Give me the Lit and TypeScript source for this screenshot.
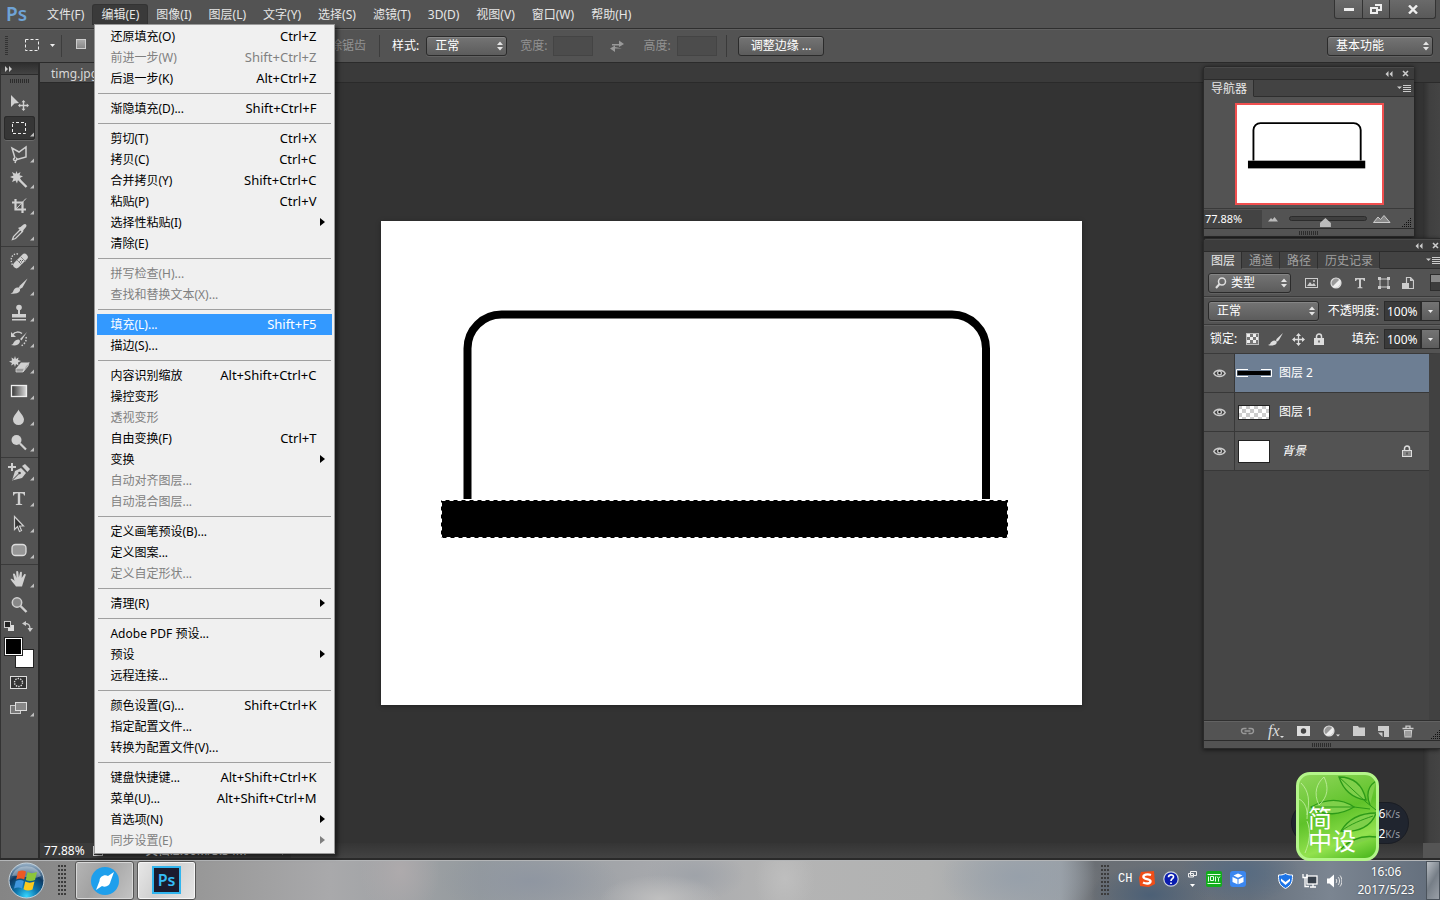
import { LitElement, html, svg, css, nothing } from "lit";
import { customElement, property } from "lit/decorators.js";
import { classMap } from "lit/directives/class-map.js";

const baseText = css`
  :host {
    font-family: "Noto Sans", "Noto Sans CJK SC", sans-serif;
    font-size: 12px;
    line-height: 16px;
  }
  * { box-sizing: border-box; }
  button, select, input {
    font: inherit;
    color: inherit;
    margin: 0;
    padding: 0;
    border: 0;
    background: none;
    border-radius: 0;
  }
  svg { display: block; flex: none; }
  ul { list-style: none; margin: 0; padding: 0; }
`;

const controls = css`
  .pick {
    display: grid;
    align-items: center;
    color: #fff;
  }
  .pick > * { grid-area: 1 / 1; }
  .pick select {
    appearance: none;
    width: 100%;
    height: 20px;
    padding: 0 16px 0 8px;
    border: 1px solid #2b2b2b;
    border-radius: 3px;
    background: linear-gradient(#747474, #5c5c5c);
    box-shadow: inset 0 1px #858585, 0 1px #626262;
  }
  .pick .updown { justify-self: end; margin-right: 4px; pointer-events: none; }
  .pick .lens { margin-left: 7px; pointer-events: none; z-index: 1; }
  .pick.search select { padding-left: 22px; }
`;

const upDown = html`<svg class="updown" width="6" height="10" viewBox="0 0 6 10"><path d="M0 4L3 0.500L6 4zM0 6h6L3 9.500z" fill="#e4e4e4"/></svg>`;

const drawing = (line: number, ants: boolean) => svg`
  <rect width="701" height="484" fill="#fff"/>
  <path d="M86.500 278V127.500a34 34 0 0 1 34-34H571a34 34 0 0 1 34 34V278" fill="none" stroke="#000" stroke-width="${line}"/>
  <rect x="60" y="279" width="567" height="38" fill="#000"/>
  ${ants ? svg`<rect x="60.500" y="279.500" width="566" height="37" fill="none" stroke="#fff" stroke-dasharray="4 4"/>` : nothing}`;

/* ---------- edit menu ---------- */

interface Entry { label: string; keys?: string; off?: boolean; sub?: boolean; hot?: boolean; }

const editGroups: Entry[][] = [
  [
    { label: "还原填充(O)", keys: "Ctrl+Z" },
    { label: "前进一步(W)", keys: "Shift+Ctrl+Z", off: true },
    { label: "后退一步(K)", keys: "Alt+Ctrl+Z" },
  ],
  [{ label: "渐隐填充(D)...", keys: "Shift+Ctrl+F" }],
  [
    { label: "剪切(T)", keys: "Ctrl+X" },
    { label: "拷贝(C)", keys: "Ctrl+C" },
    { label: "合并拷贝(Y)", keys: "Shift+Ctrl+C" },
    { label: "粘贴(P)", keys: "Ctrl+V" },
    { label: "选择性粘贴(I)", sub: true },
    { label: "清除(E)" },
  ],
  [{ label: "拼写检查(H)...", off: true }, { label: "查找和替换文本(X)...", off: true }],
  [{ label: "填充(L)...", keys: "Shift+F5", hot: true }, { label: "描边(S)..." }],
  [
    { label: "内容识别缩放", keys: "Alt+Shift+Ctrl+C" },
    { label: "操控变形" },
    { label: "透视变形", off: true },
    { label: "自由变换(F)", keys: "Ctrl+T" },
    { label: "变换", sub: true },
    { label: "自动对齐图层...", off: true },
    { label: "自动混合图层...", off: true },
  ],
  [{ label: "定义画笔预设(B)..." }, { label: "定义图案..." }, { label: "定义自定形状...", off: true }],
  [{ label: "清理(R)", sub: true }],
  [{ label: "Adobe PDF 预设..." }, { label: "预设", sub: true }, { label: "远程连接..." }],
  [{ label: "颜色设置(G)...", keys: "Shift+Ctrl+K" }, { label: "指定配置文件..." }, { label: "转换为配置文件(V)..." }],
  [
    { label: "键盘快捷键...", keys: "Alt+Shift+Ctrl+K" },
    { label: "菜单(U)...", keys: "Alt+Shift+Ctrl+M" },
    { label: "首选项(N)", sub: true },
    { label: "同步设置(E)", sub: true, off: true },
  ],
];

@customElement("edit-menu")
class EditMenu extends LitElement {
  static styles = [baseText, css`
    :host {
      display: block;
      width: 241px;
      padding: 1px 2px 2px;
      border: 1px solid #9a9a9a;
      background: #f0f0f0;
      color: #000;
      box-shadow: 3px 3px 4px rgba(0, 0, 0, 0.5);
    }
    .group + .group::before {
      content: "";
      display: block;
      height: 1px;
      margin: 4px 1px;
      background: #a0a0a0;
    }
    .row {
      display: flex;
      align-items: center;
      width: 100%;
      height: 21px;
      padding: 0 16px 0 13px;
      white-space: nowrap;
      text-align: left;
    }
    .label { flex: 1; padding-top: 2px; }
    .keys { font-size: 13px; }
    .off { color: #808080; }
    .hot { background: #3399ff; color: #fff; }
    .sub { padding-right: 7px; }
  `];

  render() {
    return html`${editGroups.map((g) => html`<div class="group" role="group">${g.map((e) => html`
      <button role="menuitem" ?disabled=${!!e.off} class=${classMap({ row: true, off: !!e.off, hot: !!e.hot, sub: !!e.sub })}>
        <span class="label">${e.label}</span>
        ${e.keys ? html`<span class="keys">${e.keys}</span>` : nothing}
        ${e.sub ? html`<svg width="5" height="8" viewBox="0 0 5 8"><path d="M0 0L5 4L0 8z" fill="currentColor"/></svg>` : nothing}
      </button>`)}</div>`)}`;
  }
}

/* ---------- tools ---------- */

const G = "#d0d0d0";

const toolGroups: { name: string; icon: unknown; more: boolean; on?: boolean }[][] = [
  [
    { name: "移动", more: false, icon: svg`<path d="M2 3v12l3.500-3.500L10 11z" fill="${G}"/><path d="M14.500 8l2 2.200h-1.300v2.600h2.600v-1.300l2.200 2-2.200 2v-1.300h-2.600v2.600h1.300l-2 2.200-2-2.200h1.300v-2.600h-2.600v1.300L9 13.500l2.200-2v1.300h2.600v-2.600h-1.300z" fill="${G}"/>` },
    { name: "矩形选框", more: true, on: true, icon: svg`<rect x="3.500" y="4.500" width="13" height="11" fill="none" stroke="#eee" stroke-dasharray="3 2" stroke-dashoffset="1.500"/>` },
    { name: "套索", more: true, icon: svg`<path d="M6 14L3 4l7 4 7-5v10l-9 2.500M6 14c-2 0-2 2.500 0 2.500s2.500-2 1-2.500M7 16l-1 3" fill="none" stroke="${G}" stroke-width="1.500"/>` },
    { name: "魔棒", more: true, icon: svg`<path d="M7.500 1l1 2.800L11.500 2l-1 3.200 3.500 1-3 1.800 1.500 3.500-3.500-1.500L8 13.500 6.500 10.500 3 12l1.500-3.500L1 7l3.500-1.500L3 2l3.500 1.800z" fill="${G}"/><path d="M10 9.500l7.500 7.500" stroke="${G}" stroke-width="2.400"/>` },
    { name: "裁剪", more: true, icon: svg`<path d="M6.500 3v10.500H17M3 6.500h10.500V17" fill="none" stroke="${G}" stroke-width="2.200"/><path d="M7 13L17 2.500" stroke="${G}"/>` },
    { name: "吸管", more: true, icon: svg`<path d="M3.500 17.500l1-3 7-7 2 2-7 7z" fill="none" stroke="${G}" stroke-width="1.300"/><path d="M10 5.500l1.500-.500 3-2.500c2-1.500 4 .500 2.500 2.500l-2.500 3-.500 1.500-1 .500-4-4z" fill="${G}"/>` },
  ],
  [
    { name: "修复画笔", more: true, icon: svg`<path d="M9 3C3 2 .500 8 3.500 14" fill="none" stroke="${G}" stroke-width="1.400" stroke-dasharray="1.400 1.400"/><path d="M7.500 14L15.500 6" stroke="${G}" stroke-width="6.500" stroke-linecap="round"/><path d="M8 9l5 5M11.500 5.500l5 5" stroke="#888"/><path d="M10 11h3M11 9.500h3" stroke="#555" stroke-dasharray="1 1"/>` },
    { name: "画笔", more: true, icon: svg`<path d="M18.500 1.500L11 8.500 9.500 11l1.500 1 2.500-1.500z" fill="${G}"/><path d="M8.500 10.500c2 0 3.500 2 2 4S5 17 1.500 16.500c2-.500 2.500-1.500 3-3s2-3 4-3z" fill="${G}"/>` },
    { name: "仿制图章", more: true, icon: svg`<circle cx="10" cy="4.500" r="2.800" fill="${G}"/><path d="M9 6h2v5h6v3.500H3V11h6zM3 16h14v1.500H3z" fill="${G}"/>` },
    { name: "历史记录画笔", more: true, icon: svg`<path d="M4 5.500C6 2.500 10 2.500 13 4.500" fill="none" stroke="${G}" stroke-width="1.500"/><path d="M2 3v5h5z" fill="${G}"/><path d="M18 3l-7 7 1.500 1.500zM9.500 10.500c2 0 2 3.500-.500 5s-5 1-7 .500c2-.500 2-1.500 3-3s2.500-2.500 4.500-2.500z" fill="${G}"/><path d="M17 8c1 3-1 7-5 9" fill="none" stroke="${G}" stroke-width="1.500" stroke-dasharray="1.500 1.500"/>` },
    { name: "橡皮擦", more: true, icon: svg`<path d="M6 1l1 3 2.500-1.500L9 5l3 1-3 1.500.500 3L7 9l-1 3-1-3-3 1.500L3 8 0 6.500 3 5.500 2.500 2.500 5 4z" fill="${G}"/><path d="M7 13.500l5-6h8l-4.500 6z" fill="${G}"/><path d="M7 13.500v3.500h7l1.500-3.500zM15.500 13.500L14 17l5-6 1-3.500z" fill="#999" stroke="${G}" stroke-width=".800"/>` },
    { name: "渐变", more: true, icon: svg`<defs><linearGradient id="g"><stop stop-color="#333"/><stop offset="1" stop-color="#ddd"/></linearGradient></defs><rect x="2.500" y="4.500" width="15" height="11" fill="url(#g)" stroke="#eee" stroke-width="1.300"/>` },
    { name: "模糊", more: true, icon: svg`<path d="M9.500 2.500c1 3 5.500 6.500 5.500 10a5.500 5.500 0 0 1-11 0C4 9 8.500 5.500 9.500 2.500z" fill="${G}"/>` },
    { name: "减淡", more: true, icon: svg`<circle cx="7.500" cy="7" r="5" fill="${G}"/><path d="M11 10.500l6 6" stroke="${G}" stroke-width="2.200"/>` },
  ],
  [
    { name: "钢笔", more: true, icon: svg`<path d="M3 1v8M-1 5h8" stroke="${G}" stroke-width="2"/><path d="M3 18.500L6 9l6-3 5 5-4 5z" fill="${G}"/><path d="M3.500 18l6-6" stroke="#444"/><circle cx="10.500" cy="11" r="1.300" fill="#444"/><path d="M13 4l3-2 5 5-2.500 3z" fill="${G}"/>` },
    { name: "文字", more: true, icon: svg`<path d="M4 4h12v3.500h-1c-.200-1.500-1-2.200-3.800-2.200V15c0 .800.500 1.200 2 1.200V17H6.800v-.800c1.500 0 2-.400 2-1.200V5.300C6 5.300 5.200 6 5 7.500H4z" fill="${G}"/>` },
    { name: "路径选择", more: true, icon: svg`<path d="M5.500 2.500v13l3-3 2 5 2-1-2-4.500h4z" fill="#333" stroke="${G}" stroke-width="1.200"/>` },
    { name: "圆角矩形", more: true, icon: svg`<rect x="3" y="4.500" width="14" height="11" rx="3.500" fill="#969696" stroke="#ddd" stroke-width="1.300"/>` },
  ],
  [
    { name: "抓手", more: true, icon: svg`<path d="M1.500 10c1.500-.800 2.500.200 4 2L4 5.500c0-1.200 1.700-1.400 2-.200L7.500 9l-.300-6c0-1.300 1.900-1.300 2.100 0l.500 5.500L11 3.500c.200-1.200 2-1 1.900.300L12.700 9l2.300-3.500c.700-1 2.100-.300 1.700.800-1.600 4-1.700 5.500-2.700 8L13 17.500H7C6 15.500 3 13 1.500 10z" fill="${G}"/>` },
    { name: "缩放", more: false, icon: svg`<circle cx="8" cy="7.500" r="4.700" fill="#888" stroke="${G}" stroke-width="1.500"/><path d="M11.500 11l6 6" stroke="${G}" stroke-width="2.400"/>` },
  ],
];

@customElement("tool-box")
class ToolBox extends LitElement {
  static styles = [baseText, css`
    :host {
      display: flex;
      flex-direction: column;
      width: 40px;
      border-left: 1px solid #333;
      border-right: 2px solid #2b2b2b;
      background: #535353;
    }
    .head {
      height: 12px;
      padding: 3px 4px;
      background: linear-gradient(#2e2e2e, #434343);
      border-bottom: 1px solid #2b2b2b;
    }
    .grip {
      width: 20px;
      height: 4px;
      margin: 4px 0 6px 9px;
      background: repeating-linear-gradient(90deg, #2c2c2c 0 1px, transparent 1px 2px);
    }
    .group { display: flex; flex-direction: column; gap: 2px; padding: 1px 3px; }
    .group + .group { border-top: 1px solid #3a3a3a; margin-top: 1px; padding-top: 2px; }
    .tool {
      display: flex;
      align-items: center;
      width: 31px;
      height: 24px;
      padding-left: 5px;
      border-radius: 3px;
    }
    .tool svg { overflow: visible; }
    .on { background: #363636; box-shadow: inset 0 0 0 1px #2a2a2a, 0 1px #6a6a6a; }
    .mini { display: flex; gap: 7px; padding: 3px 3px; height: 19px; }
    .colors { display: grid; width: 30px; height: 31px; margin-left: 3px; }
    .fore, .back { width: 19px; height: 19px; border: 1px solid #222; box-shadow: inset 0 0 0 1px #fff; grid-area: 1 / 1; }
    .fore { background: #000; z-index: 1; }
    .back { background: #fff; place-self: end; }
    .foot { display: grid; gap: 2px; padding: 2px 3px; }
  `];

  render() {
    const more = svg`<path d="M25 14.500v4h-4z" fill="#c0c0c0"/>`;
    return html`
      <div class="head"><svg width="8" height="6" viewBox="0 0 8 6"><path d="M0 0l3 3-3 3zM4 0l3 3-3 3z" fill="#ccc"/></svg></div>
      <div class="grip"></div>
      ${toolGroups.map((g) => html`<div class="group">${g.map((t) => html`
        <button class=${classMap({ tool: true, on: !!t.on })} aria-label=${t.name}>
          <svg width="20" height="20" viewBox="0 0 20 20">${t.icon}${t.more ? more : nothing}</svg>
        </button>`)}</div>`)}
      <div class="mini">
        <svg width="11" height="11" viewBox="0 0 11 11"><rect x="4" y="4" width="6" height="6" fill="#ddd"/><rect x="0.500" y="0.500" width="6" height="6" fill="#222" stroke="#ccc"/></svg>
        <svg width="11" height="11" viewBox="0 0 11 11"><path d="M3 2.500c4 0 5 1.500 5 6" fill="none" stroke="#ccc" stroke-width="1.300"/><path d="M0 2.500L4 0v5zM5.500 7h5.500L8 11z" fill="#ccc"/></svg>
      </div>
      <div class="colors"><button class="fore" aria-label="前景色"></button><button class="back" aria-label="背景色"></button></div>
      <div class="foot">
        <button class="tool" aria-label="快速蒙版"><svg width="20" height="20" viewBox="0 0 20 20"><rect x="1.500" y="4.500" width="16" height="12" fill="#333" stroke="#ddd"/><circle cx="9.500" cy="10.500" r="4" fill="none" stroke="#ddd" stroke-width="1.400" stroke-dasharray="1.400 1.100"/></svg></button>
        <button class="tool" aria-label="屏幕模式"><svg width="20" height="20" viewBox="0 0 20 20"><rect x="1.500" y="7.500" width="10" height="8" fill="#777" stroke="#ccc"/><rect x="6.500" y="4.500" width="11" height="8" fill="#888" stroke="#ddd"/>${more}</svg></button>
      </div>`;
  }
}

/* ---------- floating panels ---------- */

const panelStyles = css`
  .panel { background: #535353; color: #fff; border: 1px solid #2a2a2a; border-right: 0; border-radius: 4px 0 0 0; box-shadow: 0 1px 4px rgba(0, 0, 0, 0.6); overflow: hidden; }
  .head { display: flex; justify-content: flex-end; align-items: center; gap: 9px; height: 12px; padding-right: 5px; background: #3c3c3c; border-top: 1px solid #4a4a4a; }
  .tabs { display: flex; height: 18px; background: #434343; border-top: 1px solid #2b2b2b; color: #a0a0a0; }
  .tab { padding: 0 6px 0 7px; line-height: 17px; border-right: 1px solid #2e2e2e; border-bottom: 1px solid #5e5e5e; }
  .tab.on { background: #535353; color: #e8e8e8; border-bottom-color: #535353; }
  .rest { flex: 1; display: flex; justify-content: flex-end; align-items: center; border-bottom: 1px solid #2e2e2e; padding-right: 3px; }
  .grip { height: 8px; border-top: 1px solid #2b2b2b; display: grid; place-items: center; }
  .grip i { width: 20px; height: 4px; background: repeating-linear-gradient(90deg, #2c2c2c 0 1px, transparent 1px 2px); }
`;

const headIcons = html`
  <svg width="8" height="6" viewBox="0 0 8 6"><path d="M3.500 0v6l-3-3zM7.500 0v6l-3-3z" fill="#ccc"/></svg>
  <svg width="7" height="7" viewBox="0 0 7 7"><path d="M1 1l5 5M6 1L1 6" stroke="#ccc" stroke-width="1.600"/></svg>`;
const flyout = html`<svg width="14" height="9" viewBox="0 0 14 9"><path d="M0 2.500h5L2.500 5z" fill="#ccc"/><path d="M6 1.500h8M6 3.500h8M6 5.500h8M6 7.500h8" stroke="#ccc"/></svg>`;
const corner = html`<svg width="10" height="10" viewBox="0 0 10 10"><path d="M0 9.500h10M2 7.500h8M4 5.500h6M6 3.500h4M8 1.500h2" stroke="#111" stroke-width="1" stroke-dasharray="1 1"/></svg>`;

@customElement("navigator-panel")
class NavigatorPanel extends LitElement {
  static styles = [baseText, panelStyles, css`
    .view { display: flex; justify-content: center; padding: 6px 0 3px; }
    .frame { border: 2px solid #f04f4f; }
    .bar { display: flex; align-items: center; height: 20px; border-top: 1px solid #3a3a3a; }
    .zoom { width: 58px; height: 18px; padding-left: 1px; background: #434343; font-size: 11px; }
    .small { margin: 2px 0 0 6px; }
    .range { appearance: none; width: 78px; height: 16px; margin: 0 6px 0 11px; }
    .range::-webkit-slider-runnable-track { height: 5px; border-radius: 3px; background: #3f3f3f; border: 1px solid #2c2c2c; }
    .range::-webkit-slider-thumb { appearance: none; width: 11px; height: 9px; margin-top: 1px; background: #bbb; clip-path: polygon(50% 0, 100% 55%, 100% 100%, 0 100%, 0 55%); }
    .bar .end { margin: 6px 2px 0 auto; }
  `];

  render() {
    return html`<section class="panel">
      <div class="head">${headIcons}</div>
      <div class="tabs"><button class="tab on">导航器</button><div class="rest">${flyout}</div></div>
      <div class="view"><svg class="frame" width="149" height="102" viewBox="7 4 701 484" preserveAspectRatio="none"><rect width="708" height="488" fill="#fff"/>${drawing(9, false)}</svg></div>
      <div class="bar">
        <input class="zoom" aria-label="缩放" value="77.88%">
        <svg class="small" width="10" height="5" viewBox="0 0 10 5"><path d="M0 4.500L3 1l1.500 1.500L6.500 0 10 4.500z" fill="#bbb"/></svg>
        <input class="range" type="range" aria-label="缩放比例" min="0" max="100" value="46">
        <svg width="18" height="8" viewBox="0 0 18 8"><path d="M.500 7.500L5 2l2.500 2.500L11 .500l6 7z" fill="#888" stroke="#ccc"/></svg>
        <span class="end">${corner}</span>
      </div>
      <div class="grip"><i></i></div>
    </section>`;
  }
}

const eye = html`<svg width="13" height="10" viewBox="0 0 13 10"><path d="M.800 5.500C3 1.200 10 1.200 12.200 5.500 10 9.500 3 9.500.800 5.500z" fill="#444" stroke="#ccc" stroke-width="1.500"/><circle cx="6.500" cy="5" r="2.500" fill="#ccc"/><circle cx="6.500" cy="5" r="1.200" fill="#222"/></svg>`;
const lock = (fill: string) => html`<svg width="10" height="12" viewBox="0 0 10 12"><path d="M2.500 6V3.500a2.500 2.500 0 0 1 5 0V6" fill="none" stroke="#ddd" stroke-width="1.500"/><rect x="0.500" y="5.500" width="9" height="6" fill=${fill} stroke="#ddd"/><path d="M5 7.500v2" stroke="#444" stroke-width="1.300"/></svg>`;
const thumbs = {
  bar: html`<svg width="36" height="8" viewBox="0 0 36 8"><path d="M1.500 2h33v4h-33z" fill="#000"/><path d="M12 .500H.500v7H12M25 .500h10.500v7H25" fill="none" stroke="#fff"/></svg>`,
  clear: html`<svg width="32" height="15" viewBox="0 0 32 15"><defs><pattern id="c" width="8" height="8" patternUnits="userSpaceOnUse"><rect width="8" height="8" fill="#fff"/><path d="M0 0h4v4H0zM4 4h4v4H4z" fill="#ccc"/></pattern></defs><rect x="0.500" y="0.500" width="31" height="14" fill="url(#c)" stroke="#222"/></svg>`,
  white: html`<svg width="32" height="23" viewBox="0 0 32 23"><rect x="0.500" y="0.500" width="31" height="22" fill="#fff" stroke="#222"/></svg>`,
};
const halfDisc = svg`<circle cx="6" cy="6" r="5" fill="#999" stroke="#ddd" stroke-width="1.200"/><path d="M9.500 2.500a5 5 0 0 1-7 7z" fill="#eee"/>`;

@customElement("layers-panel")
class LayersPanel extends LitElement {
  static styles = [baseText, panelStyles, controls, css`
    :host { display: flex; flex-direction: column; }
    .panel { flex: 1; display: flex; flex-direction: column; }
    .head { padding-right: 1px; }
    .rest { padding-right: 0; overflow: hidden; }
    .line { display: flex; align-items: center; height: 27px; padding-left: 4px; border-top: 1px solid #626262; box-shadow: 0 -1px #3a3a3a; margin-top: 1px; white-space: nowrap; }
    .line.first { border-top: 0; box-shadow: none; margin-top: 0; }
    .kind { width: 83px; }
    .mode { width: 111px; }
    .filters { flex: 1; display: flex; align-items: center; justify-content: space-between; padding: 0 16px 0 14px; }
    .switch { width: 10px; height: 17px; border: 1px solid #2d2d2d; border-right: 0; background: linear-gradient(#888 50%, #3d3d3d 50%); }
    .tag { margin-left: auto; padding-right: 5px; }
    .num { width: 37px; height: 20px; padding: 0 2px; background: #3a3a3a; border: 1px solid #2b2b2b; color: #fff; }
    .drop { display: grid; place-items: center; width: 19px; height: 20px; background: linear-gradient(#747474, #5c5c5c); border: 1px solid #2b2b2b; }
    .locks { display: flex; align-items: center; gap: 9px; padding-left: 9px; }
    .lead { padding-left: 2px; }
    .list { flex: 1; background: #464646; margin-top: 1px; border-top: 1px solid #3a3a3a; border-right: 11px solid #414141; }
    .layer { display: flex; align-items: center; height: 39px; background: #535353; border-bottom: 1px solid #383838; }
    .see { width: 31px; height: 38px; display: grid; place-items: center; border-right: 1px solid #383838; }
    .body { flex: 1; height: 38px; display: flex; align-items: center; padding: 0 17px 0 1px; }
    .body.on { background: #6d7e93; }
    .pic { width: 36px; display: grid; place-items: center; }
    .name { flex: 1; padding-left: 7px; text-align: left; }
    .back { font-style: italic; padding-left: 10px; }
    .foot { display: flex; align-items: center; height: 19px; padding-left: 36px; border-top: 1px solid #626262; box-shadow: 0 -1px #2f2f2f; gap: 13px; overflow: hidden; }
    .foot .end { margin: 6px 0 0 4px; }
    .fx { font: italic 16px/16px "Liberation Serif", serif; color: #ddd; display: flex; align-items: flex-end; }
  `];

  private layer(name: string, pic: unknown, on = false, fixed = false) {
    return html`<li class="layer">
      <button class="see" aria-label="显示图层">${eye}</button>
      <button class=${classMap({ body: true, on })}><span class="pic">${pic}</span><span class=${classMap({ name: true, back: fixed })}>${name}</span>${fixed ? lock("#888") : nothing}</button>
    </li>`;
  }

  render() {
    const down = html`<svg width="5" height="3" viewBox="0 0 5 3"><path d="M0 0h5L2.500 3z" fill="#eee"/></svg>`;
    return html`<section class="panel">
      <div class="head">${headIcons}</div>
      <div class="tabs"><button class="tab on">图层</button><button class="tab">通道</button><button class="tab">路径</button><button class="tab">历史记录</button><div class="rest">${flyout}</div></div>
      <div class="line first">
        <label class="pick search kind"><svg class="lens" width="12" height="12" viewBox="0 0 12 12"><circle cx="7" cy="4.500" r="3.500" fill="none" stroke="#ddd" stroke-width="1.500"/><path d="M4.500 7L1 11" stroke="#ddd" stroke-width="2"/></svg>
          <select aria-label="筛选"><option>类型</option></select>${upDown}</label>
        <div class="filters">
          <svg width="13" height="12" viewBox="0 0 13 12"><rect x="0.500" y="1.500" width="12" height="9" fill="none" stroke="#ccc"/><path d="M2 9l3-4 2 2.500L9 6l2 3z" fill="#ccc"/><circle cx="9" cy="4" r="1" fill="#ccc"/></svg>
          <svg width="12" height="12" viewBox="0 0 12 12">${halfDisc}</svg>
          <svg width="12" height="12" viewBox="0 0 12 12"><path d="M1 1h10v3h-1L9 2.500H7V10l1.500.500v.700h-5v-.700L5 10V2.500H3L2 4H1z" fill="#ccc"/></svg>
          <svg width="12" height="12" viewBox="0 0 12 12"><rect x="2" y="2" width="8" height="8" fill="none" stroke="#ccc"/><path d="M0 0h3v3H0zM9 0h3v3H9zM0 9h3v3H0zM9 9h3v3H9z" fill="#ccc"/></svg>
          <svg width="12" height="12" viewBox="0 0 12 12"><path d="M4.500 6V.500h4l3 3v8H7" fill="none" stroke="#ccc" stroke-width="1.200"/><path d="M8 .500V4h3.500M0 6h7v6H0z" fill="#ccc"/></svg>
        </div>
        <button class="switch" aria-label="图层过滤开关"></button>
      </div>
      <div class="line">
        <label class="pick mode"><select aria-label="混合模式"><option>正常</option></select>${upDown}</label>
        <label class="tag" for="op">不透明度:</label><input id="op" class="num" value="100%"><button class="drop" aria-label="不透明度滑块">${down}</button>
      </div>
      <div class="line">
        <span class="lead">锁定:</span>
        <div class="locks">
          <svg width="13" height="12" viewBox="0 0 13 12"><rect x="0.500" y="0.500" width="12" height="11" fill="#777" stroke="#bbb"/><path d="M1 1h3v3H1zM7 1h3v3H7zM4 4h3v3H4zM10 4h2v3h-2zM1 7h3v3H1zM7 7h3v3H7z" fill="#eee"/></svg>
          <svg width="15" height="13" viewBox="0 0 15 13"><path d="M15 0L8.500 6 8 8l1.500.500L11 7zM6.500 7.500c2 0 3 2 1.500 3.500S3 13 0 12c2-.500 2-1 2.500-2s2-2.500 4-2.500z" fill="#ddd"/></svg>
          <svg width="13" height="13" viewBox="0 0 13 13"><path d="M6.500 1v11M1 6.500h11" stroke="#ddd" stroke-width="1.300"/><path d="M6.500 0L9 3H4zM6.500 13L9 10H4zM0 6.500L3 4v5zM13 6.500L10 4v5z" fill="#ddd"/></svg>
          ${lock("#ddd")}
        </div>
        <label class="tag" for="fl">填充:</label><input id="fl" class="num" value="100%"><button class="drop" aria-label="填充滑块">${down}</button>
      </div>
      <ul class="list">
        ${this.layer("图层 2", thumbs.bar, true)}
        ${this.layer("图层 1", thumbs.clear)}
        ${this.layer("背景", thumbs.white, false, true)}
      </ul>
      <div class="foot">
        <svg width="15" height="8" viewBox="0 0 15 8"><path d="M6.500 1.500H4a2.500 2.500 0 0 0 0 5h2.500M8.500 1.500H11a2.500 2.500 0 0 1 0 5H8.500M4.500 4h6" fill="none" stroke="#999" stroke-width="1.400"/></svg>
        <span class="fx">fx<svg width="4" height="4" viewBox="0 0 4 4"><path d="M0 1h4L2 3z" fill="#ddd"/></svg></span>
        <svg width="13" height="10" viewBox="0 0 13 10"><path d="M0 0h13v10H0z" fill="#ddd"/><circle cx="6.500" cy="5" r="2.700" fill="#444"/></svg>
        <svg width="17" height="12" viewBox="0 0 17 12">${halfDisc}<path d="M13 9.500h4l-2 2z" fill="#ddd"/></svg>
        <svg width="12" height="10" viewBox="0 0 12 10"><path d="M0 0h5l1 1.500h6V10H0z" fill="#ccc"/></svg>
        <svg width="11" height="11" viewBox="0 0 11 11"><path d="M0 0h11v11H6V5H0z" fill="#ccc"/><path d="M0 6.500h4.500V11z" fill="#ccc"/></svg>
        <svg width="12" height="13" viewBox="0 0 12 13"><path d="M.500 3.500h11M4 3V1.200h4V3" fill="none" stroke="#ccc" stroke-width="1.300"/><path d="M1.800 5h8.400l-.700 7.500h-7z" fill="#ccc"/><path d="M4 6v5.500M6 6v5.500M8 6v5.500" stroke="#555" stroke-width=".800"/></svg>
        <span class="end">${corner}</span>
      </div>
      <div class="grip"><i></i></div>
    </section>`;
  }
}

/* ---------- desktop taskbar ---------- */

@customElement("task-bar")
class TaskBar extends LitElement {
  static styles = [baseText, css`
    :host {
      display: flex;
      align-items: center;
      height: 40px;
      border-top: 1px solid #b4b6b8;
      color: #fff;
      background:
        radial-gradient(ellipse 60px 24px at 660px 38px, #c0c0c0, transparent),
        radial-gradient(ellipse 50px 26px at 695px 14px, #9fa3a9, transparent),
        radial-gradient(ellipse 90px 34px at 530px 20px, #8f96a1, transparent),
        radial-gradient(ellipse 40px 50px at 400px 10px, #aeaaac, transparent),
        radial-gradient(ellipse 30px 40px at 785px 18px, #bebebe, transparent),
        radial-gradient(ellipse 80px 40px at 1020px 16px, #97a0aa, transparent),
        radial-gradient(ellipse 60px 30px at 1150px 34px, #4c6076, transparent),
        radial-gradient(ellipse 60px 30px at 1240px 12px, #566b82, transparent),
        linear-gradient(90deg, #858585, #989898 200px, #a9a9ab 330px, #949a9e 480px, #a5a7ab 640px, #b4b4b4 780px, #b1b2b2 930px, #9ba1a7 1060px, #6b6f74 1095px, #66707c 1250px, #7b8591 1330px, #626d7b);
    }
    .start { margin: 0 13px 0 8px; }
    .dots { width: 9px; height: 31px; margin-right: 8px; background: radial-gradient(circle at 1px 1px, #3c3c3c 1px, transparent 1px) 0 0 / 3px 4px; }
    .app { display: grid; place-items: center; width: 59px; height: 39px; margin-right: 3px; border: 1px solid #555; border-radius: 3px; background: linear-gradient(120deg, #b5b5b5, #a2a2a2 40%, #c4c4c4); box-shadow: inset 0 0 0 1px #d8d8d8; }
    .front { background: linear-gradient(120deg, #e8e8e8, #cfcfcf 45%, #e6e6e6); box-shadow: inset 0 0 0 1px #f6f6f6; }
    .badge { display: grid; place-items: center; width: 29px; height: 28px; margin-bottom: 2px; border: 2px solid #31b5ee; background: #1b1b2e; color: #35bdf5; font: 600 16px/20px "Noto Sans", sans-serif; }
    .tray { margin-left: auto; display: flex; align-items: center; height: 39px; }
    .lang { width: 21px; padding-bottom: 3px; font: 12px/14px "Liberation Mono", monospace; }
    .icons { display: flex; align-items: center; gap: 8px; padding-bottom: 3px; }
    .sys { display: flex; align-items: center; gap: 9px; margin-left: 32px; }
    .clock { width: 80px; margin-left: 4px; text-align: center; line-height: 18px; text-shadow: 0 0 2px rgba(0, 0, 0, 0.5); }
    .show { width: 14px; height: 39px; border: 1px solid #4b535c; background: linear-gradient(120deg, #b9bec4, #767e87 50%, #9aa0a8); }
  `];

  render() {
    return html`
      <button class="start" aria-label="开始"><svg width="37" height="37" viewBox="0 0 37 37"><defs><radialGradient id="o" cx=".5" cy=".95" r=".9"><stop stop-color="#35d6ff"/><stop offset=".35" stop-color="#0d76ad"/><stop offset=".7" stop-color="#0d3a63"/><stop offset="1" stop-color="#8fa9c0"/></radialGradient></defs><circle cx="18.500" cy="18.500" r="17.500" fill="url(#o)" stroke="#c4d2dc"/><path d="M4 14C8 1 29 1 33 14 24 19 13 12 4 14z" fill="#fff" opacity=".35"/><path d="M10 9.500c3-1.500 5.500-1.500 8 0l-1.800 8c-2.500-1.500-5-1.500-8 0z" fill="#ed5a24"/><path d="M19.500 10c2.500 1.500 6 1.500 9.500 0l-2 8c-3 1.500-6.500 1.300-9.200 0z" fill="#8cc63a"/><path d="M7.800 19c3-1.500 5.500-1.500 8 0L14 26.500c-2.500-1.500-5-1.500-8 0z" fill="#3f96dd"/><path d="M17.200 19.500c2.800 1.500 6.300 1.500 9.300 0l-2 8c-3 1.300-6.300 1.300-9-.300z" fill="#fcc91c"/></svg></button>
      <div class="dots"></div>
      <button class="app" aria-label="浏览器"><svg width="28" height="28" viewBox="0 0 28 28"><circle cx="14" cy="14" r="14" fill="#1e9fec"/><path d="M23 5l-3.500 9.500c-.500 4-5 6.500-8.500 4.500L5 23l3.500-9c0-4.500 5-7 8.500-5z" fill="#fff"/></svg></button>
      <button class="app front" aria-label="Photoshop"><span class="badge">Ps</span></button>
      <div class="tray">
        <div class="dots"></div>
        <span class="lang">CH</span>
        <div class="icons">
          <svg width="16" height="16" viewBox="0 0 16 16"><path d="M2 1l13-1 1 13-6 3-9-1L0 7z" fill="#f04e18"/><path d="M12 4C8 2.500 4 4 4.500 6.200S12 8 11.500 10.500 7 13 4 11.500" fill="none" stroke="#fff" stroke-width="2.400"/></svg>
          <svg width="16" height="16" viewBox="0 0 16 16"><circle cx="8" cy="8" r="7.200" fill="#0a1cae" stroke="#cdd3dd" stroke-width="1.200"/><path d="M5.500 6.200C5.500 3 10.800 3.200 10.500 6 10.300 7.800 8 7.600 8 10M8 11.500v1.500" fill="none" stroke="#fff" stroke-width="1.700"/></svg>
          <svg width="11" height="18" viewBox="0 0 11 18"><path d="M3.500 1.500h6v4h-6zM1.500 3.500h5v3.500h-5z" fill="none" stroke="#eee"/><path d="M3 14h5l-2.500 3z" fill="#fff"/></svg>
          <svg width="16" height="16" viewBox="0 0 16 16"><rect width="16" height="16" rx="2" fill="#12ad1c"/><path d="M1.500 3.500h13M1.500 12.500h13M2.500 5.500v5M4.500 5.500h3v4h-3zM9.500 5.500v5M11 5.500l1.500 2 1.500-2M12.500 7.500v3" fill="none" stroke="#e8ffe8"/></svg>
          <svg width="16" height="16" viewBox="0 0 16 16"><rect width="16" height="16" rx="3" fill="#3b87f0"/><path d="M8 2.500l4.500 2L8 6.700 3.500 4.500zM2.500 6l5 2.200v5l-5-2.200zM13.500 6l-5 2.200v5l5-2.200z" fill="#fff"/></svg>
        </div>
        <div class="sys">
          <svg width="15" height="16" viewBox="0 0 15 16"><path d="M7.500.500c2.500 1.500 4.500 1.500 7 1.500 0 7-1 10.500-7 13.500C1.500 12.500.500 9 .500 2c2.500 0 4.500 0 7-1.500z" fill="#1c74e8" stroke="#fff"/><path d="M3 5.500l4.500 3.500L12 5.500v2.500L7.500 12 3 8z" fill="#fff"/></svg>
          <svg width="16" height="15" viewBox="0 0 16 15"><rect x="5" y="3" width="10" height="8" fill="#38414b" stroke="#fff" stroke-width="1.300"/><path d="M8 14h6M11 11v3M1 1v3.500h4V1M3 4.500v9h4" fill="none" stroke="#fff" stroke-width="1.300"/></svg>
          <svg width="15" height="14" viewBox="0 0 15 14"><path d="M0 4.500h2.500L7 .500v13L2.500 9.500H0z" fill="#fff"/><path d="M9 5c1 1 1 3 0 4M11 3c2 2 2 6 0 8M13 1.500c2.500 3 2.500 8 0 11" fill="none" stroke="#e6e6e6"/></svg>
        </div>
        <time class="clock"><div>16:06</div><div>2017/5/23</div></time>
        <button class="show" aria-label="显示桌面"></button>
      </div>`;
  }
}

/* ---------- application ---------- */

const menus = ["文件(F)", "编辑(E)", "图像(I)", "图层(L)", "文字(Y)", "选择(S)", "滤镜(T)", "3D(D)", "视图(V)", "窗口(W)", "帮助(H)"];

@customElement("app-root")
class AppRoot extends LitElement {
  @property() open = "编辑(E)";

  static styles = [baseText, controls, css`
    :host { position: relative; display: flex; flex-direction: column; height: 100vh; overflow: hidden; background: #333; color: #e6e6e6; }
    .menubar { display: flex; align-items: center; gap: 1px; height: 28px; background: #535353; }
    .logo { width: 38px; padding-left: 6px; color: #6fa3d6; font: 600 19px/26px "Noto Sans", sans-serif; }
    .item { position: relative; }
    .menu { height: 19px; padding: 0 8px; line-height: 19px; border-radius: 2px 2px 0 0; white-space: nowrap; }
    .menu.on { background: #3a3a3a; box-shadow: 0 0 0 1px #333; }
    .popup { position: absolute; left: 1px; top: 100%; z-index: 5; }
    .window { display: flex; align-self: flex-start; margin: 0 4px 0 auto; border: 1px solid #333; border-top: 0; border-radius: 0 0 3px 3px; background: linear-gradient(#6a6a6a, #595959); }
    .window button { display: grid; place-items: center; width: 27px; height: 18px; }
    .window button + button { border-left: 1px solid #333; }
    .window .close { width: 46px; }
    .options { display: flex; align-items: center; height: 35px; padding: 0 7px 0 5px; border-top: 1px solid #2f2f2f; border-bottom: 1px solid #2b2b2b; box-shadow: inset 0 1px #606060; background: #535353; white-space: nowrap; }
    .grab { width: 3px; height: 20px; margin-right: 17px; background: repeating-linear-gradient(#333 0 1px, transparent 1px 2px); }
    .preset { display: flex; align-items: center; gap: 10px; padding-right: 6px; border-right: 1px solid #3d3d3d; height: 22px; }
    .fresh { width: 10px; height: 10px; margin: 0 0 3px 14px; border: 1px solid #ccc; background: linear-gradient(#aaa, #888); }
    .smooth { width: 294px; padding-right: 13px; text-align: right; border-right: 1px solid #3d3d3d; line-height: 22px; color: #929292; }
    .smooth input { display: none; }
    .cap { margin: 0 7px 0 12px; color: #fff; }
    .dim { color: #929292; margin: 0 6px 0 13px; }
    .box { width: 40px; height: 20px; background: #4c4c4c; border: 1px solid #444; }
    .swap { margin: 0 6px 0 17px; }
    .split { width: 1px; height: 22px; margin: 0 11px 0 9px; background: #3a3a3a; }
    .push { height: 20px; padding: 0 12px; color: #fff; border: 1px solid #2b2b2b; border-radius: 3px; background: linear-gradient(#747474, #5c5c5c); box-shadow: inset 0 1px #858585; }
    .style { width: 81px; }
    .space { width: 106px; margin-left: auto; }
    .work { flex: 1; display: flex; min-height: 0; border-bottom: 2px solid #2a2a2a; }
    .doc { flex: 1; display: grid; grid-template: 20px minmax(0, 1fr) 15px / minmax(0, 1fr) 17px; min-width: 0; }
    .files { grid-column: 1 / 3; background: #3a3a3a; border-bottom: 1px solid #2a2a2a; }
    .file { display: inline-block; width: 240px; height: 19px; padding: 0 11px; line-height: 21px; text-align: left; background: #535353; color: #d8d8d8; }
    .stage { display: grid; place-items: center; }
    .art { box-shadow: 0 1px 4px #222; }
    .vbar { background: linear-gradient(90deg, #303030, #404040 40%, #444); }
    .status { display: flex; background: linear-gradient(#353535, #434343); color: #fff; }
    .info { display: flex; align-items: center; width: 251px; padding: 0 4px 0 4px; background: #3b3b3b; }
    .info svg { margin: 0 43px 0 8px; }
    .info svg.next { margin: 0 0 0 auto; }
    .nook { background: #555; }
    .dock { position: absolute; top: 66px; right: 0; bottom: 151px; width: 237px; display: flex; flex-direction: column; z-index: 2; }
    .dock navigator-panel { width: 211px; }
    .dock layers-panel { flex: 1; margin-top: 1px; }
    .speed { position: absolute; right: 31px; bottom: 56px; width: 118px; height: 42px; border-radius: 21px; padding: 1px 8px; background: #20252f; border: 1px solid #1a1d24; color: #9a9fa8; display: flex; flex-direction: column; align-items: flex-end; font-size: 10px; line-height: 20px; z-index: 2; }
    .speed b { font-weight: 400; font-size: 12px; color: #fff; }
    .ime { position: absolute; right: 61px; bottom: 39px; z-index: 3; width: 83px; height: 89px; border: 3px solid #b4f58a; border-radius: 14px; overflow: hidden; display: grid; background: linear-gradient(160deg, #8fd65a, #5fc22a 45%, #92e24e 75%, #46b41a); }
    .ime > * { grid-area: 1 / 1; }
    .words { place-self: start; padding: 31px 0 0 9px; font-size: 24px; line-height: 23px; color: #fff; z-index: 1; }
  `];

  render() {
    return html`
      <nav class="menubar">
        <span class="logo">Ps</span>
        ${menus.map((m) => html`<div class="item">
          <button class=${classMap({ menu: true, on: m === this.open })}>${m}</button>
          ${m === this.open ? html`<edit-menu class="popup" role="menu"></edit-menu>` : nothing}
        </div>`)}
        <div class="window">
          <button aria-label="最小化"><svg width="10" height="3"><path d="M0 0h10v3H0z" fill="#eee"/></svg></button>
          <button aria-label="还原"><svg width="12" height="10" viewBox="0 0 12 10"><path d="M5 1h6v5H8M1 4h6v5H1z" fill="none" stroke="#eee" stroke-width="2"/></svg></button>
          <button class="close" aria-label="关闭"><svg width="10" height="9" viewBox="0 0 10 9"><path d="M1 .500l8 8M9 .500l-8 8" stroke="#eee" stroke-width="2.400"/></svg></button>
        </div>
      </nav>
      <div class="options">
        <div class="grab"></div>
        <div class="preset">
          <svg width="15" height="14" viewBox="0 0 15 14"><rect x="0.500" y="0.500" width="13" height="11" fill="none" stroke="#eee" stroke-dasharray="3 2"/></svg>
          <svg width="5" height="3" viewBox="0 0 5 3"><path d="M0 0h5L2.500 3z" fill="#eee"/></svg>
        </div>
        <button class="fresh" aria-label="新选区"></button>
        <label class="smooth"><input type="checkbox">消除锯齿</label>
        <label class="cap" for="st">样式:</label>
        <span class="pick style"><select id="st"><option>正常</option></select>${upDown}</span>
        <label class="dim" for="w">宽度:</label><input id="w" class="box" disabled>
        <svg class="swap" width="14" height="12" viewBox="0 0 14 12"><path d="M2 4h7V.500L14 4 9 7V5.500H2zM12 8.500H5V12L0 8.500 5 5.500V7" fill="#999"/></svg>
        <label class="dim" for="h">高度:</label><input id="h" class="box" disabled>
        <div class="split"></div>
        <button class="push">调整边缘 ...</button>
        <span class="pick space"><select aria-label="工作区"><option>基本功能</option></select>${upDown}</span>
      </div>
      <main class="work">
        <tool-box></tool-box>
        <div class="doc">
          <div class="files"><button class="file">timg.jpg</button></div>
          <div class="stage"><svg class="art" width="701" height="484" viewBox="0 0 701 484">${drawing(8, true)}</svg></div>
          <div class="vbar"></div>
          <div class="status"><div class="info"><span>77.88%</span>
            <svg width="10" height="10" viewBox="0 0 10 10"><rect x="0.500" y="0.500" width="9" height="9" fill="#333" stroke="#ccc"/></svg>
            <span>文档:2.00M/3.34M</span>
            <svg class="next" width="5" height="8" viewBox="0 0 5 8"><path d="M0 0l5 4-5 4z" fill="#ccc"/></svg></div></div>
          <div class="nook"></div>
        </div>
      </main>
      <aside class="dock"><navigator-panel></navigator-panel><layers-panel></layers-panel></aside>
      <div class="speed"><div><b>6</b>K/s</div><div><b>2</b>K/s</div></div>
      <div class="ime">
        <svg width="77" height="83" viewBox="0 0 77 83">
          <g fill="#7fd04a" stroke="#2c9a18" stroke-width="1.300"><path d="M40 2c16 0 24 9 27 23C52 23 44 14 40 2zM12 32c16-9 31-8 43 0-13 8-30 10-43 0zM77 6c-9 6-10 14-6 24M42 56c8-13 20-18 35-18-4 13-18 20-35 18zM42 74c10-10 22-14 35-12"/></g>
          <path d="M40 2l27 25 10 8M12 32h43l16 2M42 56c10-7 20-11 32-15" fill="none" stroke="#2c9a18"/>
          <g fill="none" stroke="#d2f5b4" opacity=".7"><path d="M2 8c8 8 9 18 6 32M20 30C14 18 18 8 25 2c5 10 4 20-5 28zM0 24c6 3 9 10 8 20M8 46c4 10 3 20-2 32"/></g>
        </svg>
        <div class="words">简<br>中设</div>
      </div>
      <task-bar></task-bar>`;
  }
}
